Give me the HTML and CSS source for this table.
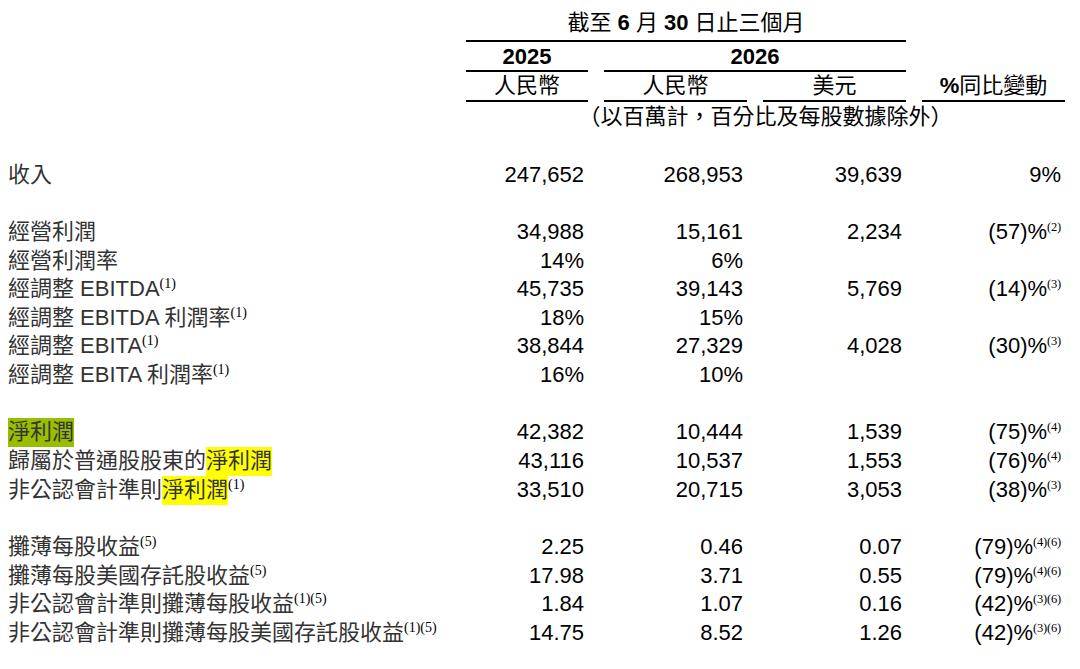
FILE: index.html
```html
<!DOCTYPE html>
<html lang="zh-Hant">
<head>
<meta charset="utf-8">
<title>截至6月30日止三個月</title>
<link rel="stylesheet" href="styles.css">
</head>
<body>
<div class="table">
  <div class="h title">截至 <b>6</b> 月 <b>30</b> 日止三個月</div>

  <div class="h year c2">2025</div>
  <div class="h year span34">2026</div>

  <div class="h cur c2">人民幣</div>
  <div class="h cur c3">人民幣</div>
  <div class="h cur c4">美元</div>
  <div class="h cur c5"><b>%</b>同比變動</div>

  <div class="h note">（以百萬計，百分比及每股數據除外）</div>

  <div class="spacer"></div>

  <div class="lbl">收入</div>
  <div class="num c2">247,652</div><div class="num c3">268,953</div><div class="num c4">39,639</div><div class="num c5">9%</div>

  <div class="spacer"></div>

  <div class="lbl">經營利潤</div>
  <div class="num c2">34,988</div><div class="num c3">15,161</div><div class="num c4">2,234</div><div class="num c5">(57)%<sup class="ns">(2)</sup></div>

  <div class="lbl">經營利潤率</div>
  <div class="num c2">14%</div><div class="num c3">6%</div>

  <div class="lbl">經調整 EBITDA<sup class="ls">(1)</sup></div>
  <div class="num c2">45,735</div><div class="num c3">39,143</div><div class="num c4">5,769</div><div class="num c5">(14)%<sup class="ns">(3)</sup></div>

  <div class="lbl">經調整 EBITDA 利潤率<sup class="ls">(1)</sup></div>
  <div class="num c2">18%</div><div class="num c3">15%</div>

  <div class="lbl">經調整 EBITA<sup class="ls">(1)</sup></div>
  <div class="num c2">38,844</div><div class="num c3">27,329</div><div class="num c4">4,028</div><div class="num c5">(30)%<sup class="ns">(3)</sup></div>

  <div class="lbl">經調整 EBITA 利潤率<sup class="ls">(1)</sup></div>
  <div class="num c2">16%</div><div class="num c3">10%</div>

  <div class="spacer"></div>

  <div class="lbl"><span class="hl green">淨利潤</span></div>
  <div class="num c2">42,382</div><div class="num c3">10,444</div><div class="num c4">1,539</div><div class="num c5">(75)%<sup class="ns">(4)</sup></div>

  <div class="lbl">歸屬於普通股股東的<span class="hl yellow">淨利潤</span></div>
  <div class="num c2">43,116</div><div class="num c3">10,537</div><div class="num c4">1,553</div><div class="num c5">(76)%<sup class="ns">(4)</sup></div>

  <div class="lbl">非公認會計準則<span class="hl yellow">淨利潤</span><sup class="ls">(1)</sup></div>
  <div class="num c2">33,510</div><div class="num c3">20,715</div><div class="num c4">3,053</div><div class="num c5">(38)%<sup class="ns">(3)</sup></div>

  <div class="spacer"></div>

  <div class="lbl">攤薄每股收益<sup class="ls">(5)</sup></div>
  <div class="num c2">2.25</div><div class="num c3">0.46</div><div class="num c4">0.07</div><div class="num c5">(79)%<sup class="ns">(4)(6)</sup></div>

  <div class="lbl">攤薄每股美國存託股收益<sup class="ls">(5)</sup></div>
  <div class="num c2">17.98</div><div class="num c3">3.71</div><div class="num c4">0.55</div><div class="num c5">(79)%<sup class="ns">(4)(6)</sup></div>

  <div class="lbl">非公認會計準則攤薄每股收益<sup class="ls">(1)(5)</sup></div>
  <div class="num c2">1.84</div><div class="num c3">1.07</div><div class="num c4">0.16</div><div class="num c5">(42)%<sup class="ns">(3)(6)</sup></div>

  <div class="lbl">非公認會計準則攤薄每股美國存託股收益<sup class="ls">(1)(5)</sup></div>
  <div class="num c2">14.75</div><div class="num c3">8.52</div><div class="num c4">1.26</div><div class="num c5">(42)%<sup class="ns">(3)(6)</sup></div>
</div>
</body>
</html>
```

FILE: styles.css
```css
html, body {
  margin: 0;
  padding: 0;
  background: #ffffff;
}

body {
  font-family: "Liberation Sans", "Noto Sans CJK TC", Arial, sans-serif;
  color: #000;
}

.table {
  display: grid;
  grid-template-columns: 442px 122px 143px 143px 143px;
  column-gap: 16px;
  padding: 0 8px;
}

.h {
  font-size: 22px;
  text-align: center;
  color: #000;
  white-space: nowrap;
}

.h b {
  font-weight: 700;
}

.title {
  grid-column: 2 / 5;
  line-height: 28px;
  padding-top: 9px;
  padding-bottom: 3px;
  border-bottom: 2px solid #000;
}

.year {
  font-weight: 700;
  line-height: 26px;
  padding-top: 2px;
  border-bottom: 2px solid #000;
}

.span34 {
  grid-column: 3 / 5;
}

.cur {
  line-height: 28px;
  border-bottom: 2px solid #000;
}

.note {
  grid-column: 2 / 6;
  line-height: 30px;
}

.c2 { grid-column: 2; }
.c3 { grid-column: 3; }
.c4 { grid-column: 4; }
.c5 { grid-column: 5; }

.spacer {
  grid-column: 1 / -1;
  height: 28.65px;
}

.lbl {
  grid-column: 1;
  font-size: 22px;
  line-height: 28.65px;
  height: 28.65px;
  color: #333333;
  white-space: nowrap;
}

.num {
  font-size: 22px;
  line-height: 28.65px;
  height: 28.65px;
  text-align: right;
  padding-right: 4px;
  color: #000;
  white-space: nowrap;
}

.hl {
  display: inline-block;
  height: 29px;
  line-height: 28.65px;
  vertical-align: top;
}

.green {
  background: #99be00;
}

.yellow {
  background: #ffff00;
}

sup {
  font-family: "Liberation Serif", "Times New Roman", serif;
  line-height: 0;
}

.ls {
  font-size: 14px;
  vertical-align: 8px;
  color: #000;
}

.ns {
  font-size: 12.5px;
  vertical-align: 8px;
  letter-spacing: -0.2px;
}
```
